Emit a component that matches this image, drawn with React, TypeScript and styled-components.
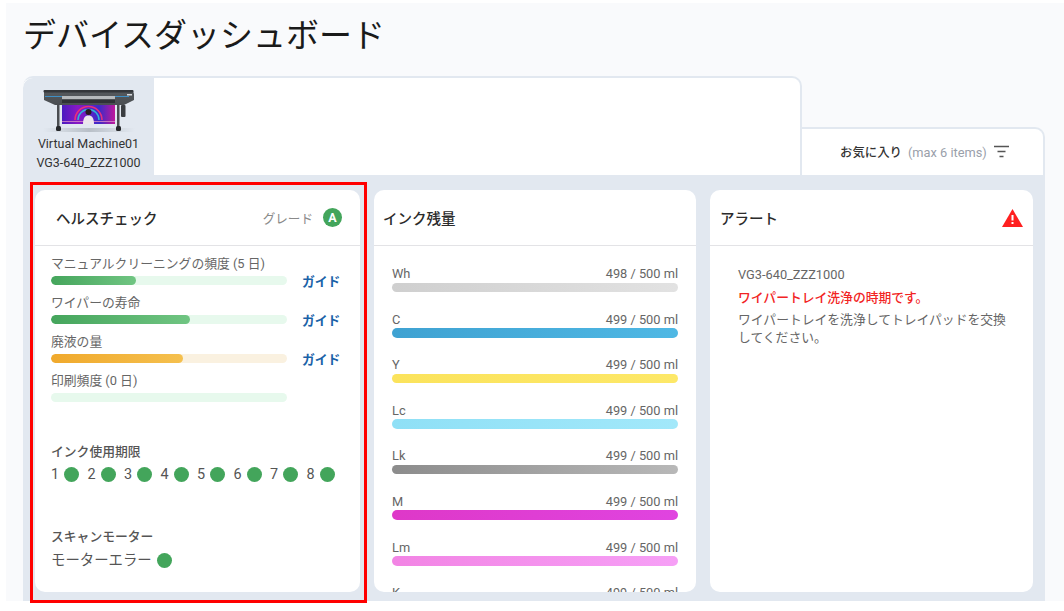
import React from "react";
import styled, { createGlobalStyle } from "styled-components";

const Global = createGlobalStyle`
  html, body { margin: 0; padding: 0; background: #fff; }
  body { font-family: Roboto, "Noto Sans CJK JP", sans-serif; width: 1064px; height: 611px; overflow: hidden; }
  * { box-sizing: border-box; }
`;

const Shell = styled.div`
  position: relative;
  margin: 3px 0 0 6px;
  height: 598px;
  padding-left: 17px;
  background: #f9fafc;
`;
const Title = styled.h1`
  margin: 0;
  height: 73px;
  padding: 8px 0 0;
  font-size: 33px;
  line-height: 50px;
  font-weight: 400;
  color: #1a1a1a;
`;
const TabRow = styled.div`
  display: flex;
  align-items: flex-end;
  height: 99px;
`;
const TabStrip = styled.div`
  width: 779px;
  height: 99px;
  background: #fff;
  border: solid #e2e8f0;
  border-width: 2px 2px 0 0;
  border-radius: 10px 10px 0 0;
`;
const DeviceTab = styled.div`
  width: 131px;
  height: 97px;
  background: #e2e8f0;
  border-top-left-radius: 10px;
  display: flex;
  flex-direction: column;
  align-items: center;
  padding-top: 10px;
  font-size: 12.5px;
  line-height: 19px;
  color: #333;
  text-align: center;
`;
const FavTab = styled.div`
  width: 243px;
  height: 48px;
  background: #fff;
  border: solid #e2e8f0;
  border-width: 2px 2px 0 0;
  border-top-right-radius: 10px;
  display: flex;
  align-items: center;
  padding: 0 0 0 38px;
  font-size: 12.8px;
`;
const FavLabel = styled.span`
  font-size: 12.4px;
  font-weight: 500;
  color: #333;
`;
const FavHint = styled.span`
  margin-left: 6px;
  color: #9aa0aa;
`;
const FilterIcon = styled.svg`
  margin-left: 7px;
  width: 16px;
  height: 14px;
`;
const Board = styled.div`
  width: 1022px;
  height: 426px;
  padding: 15px 12px 9px;
  background: #e2e8f0;
  display: grid;
  grid-template-columns: 325px 322px 323px;
  gap: 14px;
`;
const Card = styled.section`
  background: #fff;
  border-radius: 10px;
  overflow: hidden;
  height: 402px;
`;
const CardHead = styled.header<{ $pad: number }>`
  height: 56px;
  padding: 0 ${(p) => (p.$pad === 21 ? 18 : 10)}px 0 ${(p) => p.$pad}px;
  border-bottom: 1px solid #e3e3e6;
  display: flex;
  align-items: center;
  justify-content: space-between;
`;
const CardTitle = styled.h2`
  margin: 0;
  font-size: 14.5px;
  font-weight: 500;
  color: #2b2b2b;
`;
const Grade = styled.div`
  display: flex;
  align-items: center;
  gap: 10px;
  font-size: 12.6px;
  color: #8a8a8a;
`;
const Badge = styled.span`
  width: 19px;
  height: 19px;
  border-radius: 50%;
  background: #43a55b;
  color: #fff;
  font-size: 12.5px;
  font-weight: 700;
  display: flex;
  align-items: center;
  justify-content: center;
`;
const HealthBody = styled.div`
  padding: 7.5px 0 0 16px;
`;
const Meter = styled.div`
  display: grid;
  grid-template-columns: 236px auto;
  column-gap: 15px;
  align-content: start;
  height: 39.3px;
`;
const MeterLabel = styled.div`
  grid-column: 1 / 3;
  font-size: 12.8px;
  line-height: 19px;
  color: #666;
`;
const Track = styled.div<{ $bg: string }>`
  height: 9px;
  border-radius: 5px;
  background: ${(p) => p.$bg};
  overflow: hidden;
  margin-top: 3px;
`;
const Fill = styled.div<{ $from: string; $to: string }>`
  height: 100%;
  border-radius: 5px;
  background: linear-gradient(90deg, ${(p) => p.$from}, ${(p) => p.$to});
`;
const Guide = styled.a`
  margin-top: 0;
  font-size: 12.8px;
  line-height: 18px;
  font-weight: 700;
  color: #1a62a8;
`;
const SubHead = styled.h3<{ $top: number }>`
  margin: ${(p) => p.$top}px 0 0;
  font-size: 12.8px;
  line-height: 20px;
  font-weight: 500;
  color: #555;
`;
const DotRow = styled.div`
  display: flex;
  margin-top: 1.5px;
  height: 22px;
`;
const DotItem = styled.div`
  width: 36.5px;
  display: flex;
  align-items: center;
  font-size: 14.4px;
  color: #555;
`;
const Dot = styled.span`
  width: 15px;
  height: 15px;
  border-radius: 50%;
  background: #43a55b;
  margin-left: 5px;
`;
const MotorRow = styled.div`
  display: flex;
  align-items: center;
  margin-top: 2px;
  font-size: 14.4px;
  line-height: 24px;
  color: #555;
`;
const InkList = styled.div`
  padding: 19px 18px 0;
`;
const InkItem = styled.div`
  height: 45.6px;
`;
const InkText = styled.div`
  display: flex;
  justify-content: space-between;
  font-size: 12.8px;
  line-height: 17.5px;
  color: #666;
`;
const InkBar = styled.div<{ $from: string; $to: string }>`
  height: 9.5px;
  border-radius: 5px;
  background: linear-gradient(90deg, ${(p) => p.$from}, ${(p) => p.$to});
`;
const AlertBody = styled.div`
  padding: 20px 26px 0 28px;
  font-size: 12.8px;
  line-height: 17.5px;
  color: #666;
`;
const AlertLine = styled.p<{ $strong?: boolean }>`
  margin: 5px 0 0;
  color: ${(p) => (p.$strong ? "#f22424" : "#666")};
  font-weight: ${(p) => (p.$strong ? 500 : 400)};
`;
const Highlight = styled.div`
  position: absolute;
  left: 24px;
  top: 179px;
  width: 337px;
  height: 421px;
  border: 3px solid #f00;
  pointer-events: none;
`;

const Printer = () => (
  <svg width="92" height="46" viewBox="0 0 92 46" aria-label="printer">
    <defs>
      <linearGradient id="art" x1="0" x2="1">
        <stop offset="0" stopColor="#4a1cc0" />
        <stop offset="0.3" stopColor="#8a18c4" />
        <stop offset="0.7" stopColor="#3c2ac8" />
        <stop offset="1" stopColor="#c0189a" />
      </linearGradient>
      <linearGradient id="body" x1="0" x2="0" y1="0" y2="1">
        <stop offset="0" stopColor="#55595d" />
        <stop offset="1" stopColor="#4a4e52" />
      </linearGradient>
      <linearGradient id="floor" x1="0" x2="1">
        <stop offset="0" stopColor="#e2e8f0" />
        <stop offset="0.5" stopColor="#b9c0c8" />
        <stop offset="1" stopColor="#e2e8f0" />
      </linearGradient>
    </defs>
    <rect x="0" y="40" width="92" height="4" fill="url(#floor)" />
    <path d="M1 3h89l1 3v6l-10 5H12L1 12z" fill="url(#body)" />
    <rect x="0.5" y="2" width="90" height="2.5" rx="1" fill="#33363a" />
    <rect x="2" y="8" width="17" height="1" fill="#3f8fc4" />
    <rect x="72" y="8" width="14" height="1" fill="#3f8fc4" />
    <rect x="84" y="6" width="5" height="1.5" fill="#d7dade" />
    <rect x="19" y="8" width="53" height="3" fill="#b5b9bc" />
    <rect x="19" y="12" width="53" height="3" fill="#2f3236" />
    <rect x="19" y="17" width="53" height="19" fill="url(#art)" />
    <rect x="19" y="33" width="53" height="1" fill="#d68cc8" opacity="0.8" />
    <path d="M35 32a10.500 10.500 0 0 1 21 0" fill="none" stroke="#2fb6d8" strokeWidth="1.4" />
    <path d="M32 32a13.500 13.500 0 0 1 27 0" fill="none" stroke="#e8307a" strokeWidth="1.6" />
    <circle cx="45.500" cy="24" r="3" fill="#2a1a20" />
    <path d="M40 36c0-6 2-8.500 5.500-8.500S51 30 51 36z" fill="#ece6ec" />
    <rect x="14" y="16" width="2.500" height="24" fill="#4a4d51" />
    <rect x="74" y="16" width="2.500" height="24" fill="#4a4d51" />
    <rect x="78" y="17" width="4.500" height="12" rx="1" fill="#3a3d41" />
    <rect x="13" y="38" width="5" height="5" rx="1.500" fill="#26282b" />
    <rect x="73" y="38" width="5" height="5" rx="1.500" fill="#26282b" />
  </svg>
);

const meters = [
  { label: "マニュアルクリーニングの頻度 (5 日)", pct: 36, bg: "#e7f9ed", from: "#45a55c", to: "#70c582", guide: true },
  { label: "ワイパーの寿命", pct: 59, bg: "#e7f9ed", from: "#45a55c", to: "#70c582", guide: true },
  { label: "廃液の量", pct: 56, bg: "#faf1e0", from: "#f0a92c", to: "#f5c04e", guide: true },
  { label: "印刷頻度 (0 日)", pct: 0, bg: "#e7f9ed", from: "#45a55c", to: "#70c582", guide: false },
];

const inks = [
  { n: "Wh", v: "498 / 500 ml", from: "#cfcfcf", to: "#e2e2e2" },
  { n: "C", v: "499 / 500 ml", from: "#3fa2d2", to: "#4fb8e4" },
  { n: "Y", v: "499 / 500 ml", from: "#fbe35c", to: "#fde868" },
  { n: "Lc", v: "499 / 500 ml", from: "#8fe0f6", to: "#a2e8fa" },
  { n: "Lk", v: "499 / 500 ml", from: "#8c8c8c", to: "#b8b8b8" },
  { n: "M", v: "499 / 500 ml", from: "#de38c8", to: "#e044e0" },
  { n: "Lm", v: "499 / 500 ml", from: "#f284e4", to: "#f6a0f6" },
  { n: "K", v: "499 / 500 ml", from: "#333", to: "#555" },
];

export default function App() {
  return (
    <Shell>
      <Global />
      <Title>デバイスダッシュボード</Title>
      <TabRow>
        <TabStrip>
          <DeviceTab>
            <Printer />
            <div>
              Virtual Machine01
              <br />
              VG3-640_ZZZ1000
            </div>
          </DeviceTab>
        </TabStrip>
        <FavTab>
          <FavLabel>お気に入り</FavLabel>
          <FavHint>(max 6 items)</FavHint>
          <FilterIcon viewBox="0 0 16 14">
            <path d="M0 1.500h15M3.500 6.500h8M5.500 11.500h4" stroke="#555" strokeWidth="1.4" fill="none" />
          </FilterIcon>
        </FavTab>
      </TabRow>
      <Board>
        <Card>
          <CardHead $pad={21}>
            <CardTitle>ヘルスチェック</CardTitle>
            <Grade>
              グレード
              <Badge>A</Badge>
            </Grade>
          </CardHead>
          <HealthBody>
            {meters.map((m) => (
              <Meter key={m.label}>
                <MeterLabel>{m.label}</MeterLabel>
                <Track $bg={m.bg}>
                  {m.pct > 0 && (
                    <Fill $from={m.from} $to={m.to} style={{ width: `${m.pct}%` }} />
                  )}
                </Track>
                {m.guide && <Guide>ガイド</Guide>}
              </Meter>
            ))}
            <SubHead $top={31.5}>インク使用期限</SubHead>
            <DotRow>
              {[1, 2, 3, 4, 5, 6, 7, 8].map((n) => (
                <DotItem key={n}>
                  {n}
                  <Dot />
                </DotItem>
              ))}
            </DotRow>
            <SubHead $top={41}>スキャンモーター</SubHead>
            <MotorRow>
              モーターエラー
              <Dot />
            </MotorRow>
          </HealthBody>
        </Card>
        <Card>
          <CardHead $pad={9}>
            <CardTitle>インク残量</CardTitle>
          </CardHead>
          <InkList>
            {inks.map((i) => (
              <InkItem key={i.n}>
                <InkText>
                  <span>{i.n}</span>
                  <span>{i.v}</span>
                </InkText>
                <InkBar $from={i.from} $to={i.to} />
              </InkItem>
            ))}
          </InkList>
        </Card>
        <Card>
          <CardHead $pad={10}>
            <CardTitle>アラート</CardTitle>
            <svg width="21" height="18" viewBox="0 0 21 18" aria-label="warning">
              <path d="M10.500 0L21 18H0z" fill="#ff2020" />
              <rect x="9.500" y="6" width="2" height="5.500" fill="#fff" />
              <rect x="9.500" y="13" width="2" height="2" fill="#fff" />
            </svg>
          </CardHead>
          <AlertBody>
            <div>VG3-640_ZZZ1000</div>
            <AlertLine $strong>ワイパートレイ洗浄の時期です。</AlertLine>
            <AlertLine>ワイパートレイを洗浄してトレイパッドを交換してください。</AlertLine>
          </AlertBody>
        </Card>
      </Board>
      <Highlight />
    </Shell>
  );
}
